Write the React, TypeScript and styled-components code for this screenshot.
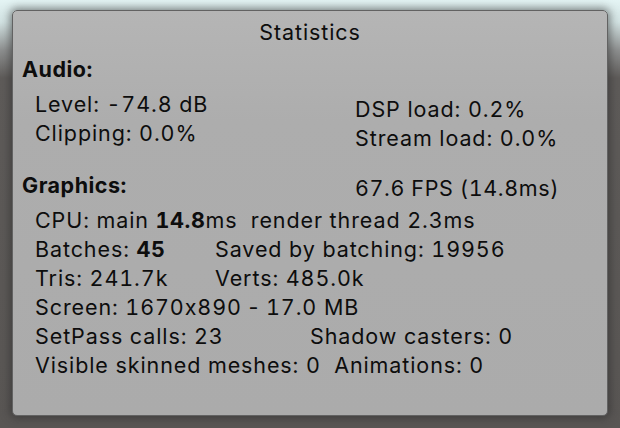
import React from "react";
import styled, { createGlobalStyle } from "styled-components";

const Global = createGlobalStyle`
  html, body { margin: 0; padding: 0; }
  body {
    width: 620px;
    height: 428px;
    overflow: hidden;
    background: linear-gradient(to bottom, #e4f4f4 0px, #d2e2e2 22px, #8e9090 50px, #5e5b59 78px, #595654 100%);
    font-family: Inter, "Noto Sans", sans-serif;
    font-feature-settings: "calt" 0, "tnum" 1;
  }
`;

const Stage = styled.div`
  padding: 10px 12px 0 12px;
`;

const Panel = styled.div`
  box-sizing: border-box;
  width: 596px;
  height: 406px;
  border: 1.5px solid #626262;
  border-radius: 5px;
  background: linear-gradient(to bottom, #b5b5b5 0px, #adadad 110px, #ababab 100%);
  box-shadow: 0 0 9px 2px rgba(40, 40, 40, 0.55);
  padding: 7px 0 0 9px;
  color: #0d0d0d;
  font-size: 21.5px;
  letter-spacing: 0.9px;
  line-height: 29px;
`;

const Title = styled.div`
  text-align: center;
  padding-right: 9px;
`;

const Heading = styled.div<{ $top: number }>`
  display: grid;
  grid-template-columns: 333px 1fr;
  margin-top: ${(p) => p.$top}px;
`;

const HeadLabel = styled.span`
  font-weight: 700;
  letter-spacing: 0.5px;
`;

const Aside = styled.span<{ $drop: number }>`
  font-weight: 400;
  display: block;
  letter-spacing: 0.6px;
  transform: translateY(${(p) => p.$drop}px);
`;

const Body = styled.div`
  padding-left: 13px;
  margin-top: 6px;
`;

const Columns = styled.div`
  display: grid;
  grid-template-columns: 320px 1fr;
`;

const Stack = styled.div<{ $drop?: number }>`
  display: flex;
  flex-direction: column;
  transform: translateY(${(p) => p.$drop ?? 0}px);
`;

const Line = styled.div<{ $split?: number }>`
  display: grid;
  grid-template-columns: ${(p) => (p.$split ? `${p.$split}px 1fr` : "1fr")};
  white-space: pre;
`;

const B = styled.b`
  font-weight: 700;
  letter-spacing: 0.6px;
`;

/* punctuation keeps its proportional width */
const P = styled.span`
  font-feature-settings: "calt" 0, "tnum" 0;
`;

export default function App() {
  return (
    <>
      <Global />
      <Stage>
        <Panel>
          <Title>Statistics</Title>
          <Heading $top={8}>
            <HeadLabel>Audio:</HeadLabel>
          </Heading>
          <Body>
            <Columns>
              <Stack>
                <Line>Level: -74.8 dB</Line>
                <Line>Clipping: 0.0%</Line>
              </Stack>
              <Stack $drop={5}>
                <Line>DSP load: 0.2%</Line>
                <Line>Stream load: 0.0%</Line>
              </Stack>
            </Columns>
          </Body>
          <Heading $top={23}>
            <HeadLabel>Graphics:</HeadLabel>
            <Aside $drop={3}>67.6 FPS (14.8ms)</Aside>
          </Heading>
          <Body>
            <Line>
              <span>
                CPU: main <B>14.8</B>ms  render thread 2.3ms
              </span>
            </Line>
            <Line $split={180}>
              <span>
                Batches: <B>45</B>
              </span>
              <span>Saved by batching: 19956</span>
            </Line>
            <Line $split={180}>
              <span>Tris: 241.7k</span>
              <span>Verts: 485.0k</span>
            </Line>
            <Line>
              <span>
                Screen: 1670<P>x</P>890 <P>-</P> 17.0 MB
              </span>
            </Line>
            <Line $split={275}>
              <span>SetPass calls: 23</span>
              <span>Shadow casters: 0</span>
            </Line>
            <Line>Visible skinned meshes: 0  Animations: 0</Line>
          </Body>
        </Panel>
      </Stage>
    </>
  );
}
